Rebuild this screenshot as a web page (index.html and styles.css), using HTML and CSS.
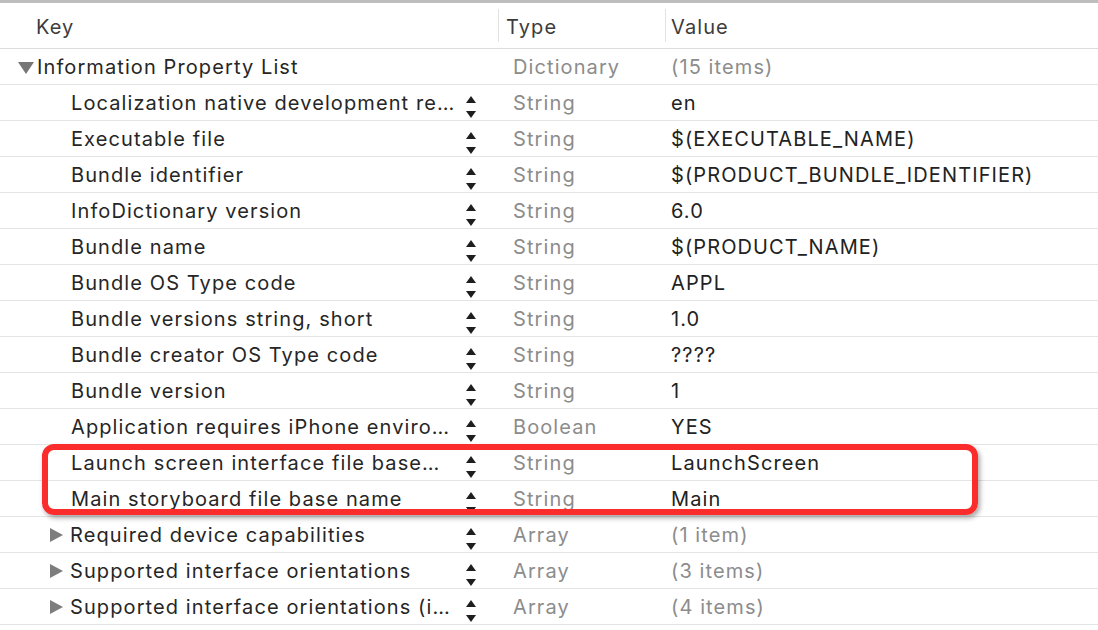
FILE: index.html
```html
<!DOCTYPE html>
<html>
<head>
<meta charset="utf-8">
<link rel="stylesheet" href="styles.css">
</head>
<body>
<div class="plist">
  <div class="header">
    <div class="hcell hkey">Key</div>
    <div class="hcell htype">Type</div>
    <div class="hcell hvalue">Value</div>
  </div>

  <div class="row">
    <div class="key root"><span class="disc open"></span><span class="name">Information Property List</span></div>
    <div class="type">Dictionary</div>
    <div class="value dim">(15 items)</div>
  </div>

  <div class="row">
    <div class="key child"><span class="name">Localization native development re…</span><span class="stepper"></span></div>
    <div class="type">String</div>
    <div class="value">en</div>
  </div>
  <div class="row">
    <div class="key child"><span class="name">Executable file</span><span class="stepper"></span></div>
    <div class="type">String</div>
    <div class="value">$(EXECUTABLE_NAME)</div>
  </div>
  <div class="row">
    <div class="key child"><span class="name">Bundle identifier</span><span class="stepper"></span></div>
    <div class="type">String</div>
    <div class="value">$(PRODUCT_BUNDLE_IDENTIFIER)</div>
  </div>
  <div class="row">
    <div class="key child"><span class="name">InfoDictionary version</span><span class="stepper"></span></div>
    <div class="type">String</div>
    <div class="value">6.0</div>
  </div>
  <div class="row">
    <div class="key child"><span class="name">Bundle name</span><span class="stepper"></span></div>
    <div class="type">String</div>
    <div class="value">$(PRODUCT_NAME)</div>
  </div>
  <div class="row">
    <div class="key child"><span class="name">Bundle OS Type code</span><span class="stepper"></span></div>
    <div class="type">String</div>
    <div class="value">APPL</div>
  </div>
  <div class="row">
    <div class="key child"><span class="name">Bundle versions string, short</span><span class="stepper"></span></div>
    <div class="type">String</div>
    <div class="value">1.0</div>
  </div>
  <div class="row">
    <div class="key child"><span class="name">Bundle creator OS Type code</span><span class="stepper"></span></div>
    <div class="type">String</div>
    <div class="value">????</div>
  </div>
  <div class="row">
    <div class="key child"><span class="name">Bundle version</span><span class="stepper"></span></div>
    <div class="type">String</div>
    <div class="value">1</div>
  </div>
  <div class="row">
    <div class="key child"><span class="name">Application requires iPhone enviro…</span><span class="stepper"></span></div>
    <div class="type">Boolean</div>
    <div class="value">YES</div>
  </div>
  <div class="row">
    <div class="key child"><span class="name">Launch screen interface file base…</span><span class="stepper"></span></div>
    <div class="type">String</div>
    <div class="value">LaunchScreen</div>
  </div>
  <div class="row">
    <div class="key child"><span class="name">Main storyboard file base name</span><span class="stepper"></span></div>
    <div class="type">String</div>
    <div class="value">Main</div>
  </div>
  <div class="row">
    <div class="key child"><span class="disc closed"></span><span class="name">Required device capabilities</span><span class="stepper"></span></div>
    <div class="type">Array</div>
    <div class="value dim">(1 item)</div>
  </div>
  <div class="row">
    <div class="key child"><span class="disc closed"></span><span class="name">Supported interface orientations</span><span class="stepper"></span></div>
    <div class="type">Array</div>
    <div class="value dim">(3 items)</div>
  </div>
  <div class="row">
    <div class="key child"><span class="disc closed"></span><span class="name">Supported interface orientations (i…</span><span class="stepper"></span></div>
    <div class="type">Array</div>
    <div class="value dim">(4 items)</div>
  </div>

  <div class="highlight"></div>
</div>
</body>
</html>
```

FILE: styles.css
```css
html, body {
  margin: 0;
  padding: 0;
  background: #ffffff;
}

body {
  font-family: Inter, "Liberation Sans", Arial, sans-serif;
  font-size: 20px;
  letter-spacing: 1.1px;
  color: #262626;
  width: 1098px;
  height: 630px;
  overflow: hidden;
}

.plist {
  position: relative;
  border-top: 3px solid #bdbdbd;
}

.header {
  display: grid;
  grid-template-columns: 498px 167px 1fr;
  height: 45px;
  border-bottom: 1px solid #dcdcdc;
  align-items: center;
}

.hcell {
  color: #3c3c3c;
  height: 33px;
  padding-top: 3px;
  display: flex;
  align-items: center;
  box-sizing: border-box;
}

.hkey { padding-left: 36px; }
.htype { padding-left: 7px; border-left: 1px solid #e2e2e2; }
.hvalue { padding-left: 5px; border-left: 1px solid #e2e2e2; }

.row {
  display: grid;
  grid-template-columns: 498px 167px 1fr;
  height: 35px;
  border-bottom: 1px solid #e4e4e4;
  align-items: center;
}

.key {
  display: flex;
  align-items: center;
  height: 100%;
  position: relative;
}

.key.root { padding-left: 18px; }
.key.child { padding-left: 50px; }

.name {
  white-space: nowrap;
  margin-left: 21px;
}

.key.root .name { margin-left: 3px; }
.disc + .name { margin-left: 7px; }

.disc {
  display: inline-block;
  width: 0;
  height: 0;
}

.disc.open {
  border-left: 8px solid transparent;
  border-right: 8px solid transparent;
  border-top: 12px solid #777777;
  margin-top: 2px;
}

.disc.closed {
  border-top: 7px solid transparent;
  border-bottom: 7px solid transparent;
  border-left: 13px solid #7d7d7d;
  margin-top: 1px;
}

.stepper {
  position: absolute;
  left: 466px;
  top: 0;
  width: 10px;
  height: 100%;
}

.stepper::before,
.stepper::after {
  content: "";
  position: absolute;
  left: 0;
  width: 0;
  height: 0;
  border-left: 5px solid transparent;
  border-right: 5px solid transparent;
}

.stepper::before {
  top: 11px;
  border-bottom: 7px solid #1e1e1e;
}

.stepper::after {
  top: 26px;
  border-top: 7px solid #1e1e1e;
}

.type {
  padding-left: 15px;
  color: #8c8c8c;
}

.value {
  padding-left: 6px;
  color: #222222;
}

.value.dim {
  color: #8c8c8c;
}

.highlight {
  position: absolute;
  left: 42px;
  top: 441px;
  width: 924px;
  height: 59px;
  border: 6px solid #fb2c2c;
  border-radius: 12px;
  box-shadow: 2px 3px 5px rgba(0, 0, 0, 0.35);
  pointer-events: none;
}
```
